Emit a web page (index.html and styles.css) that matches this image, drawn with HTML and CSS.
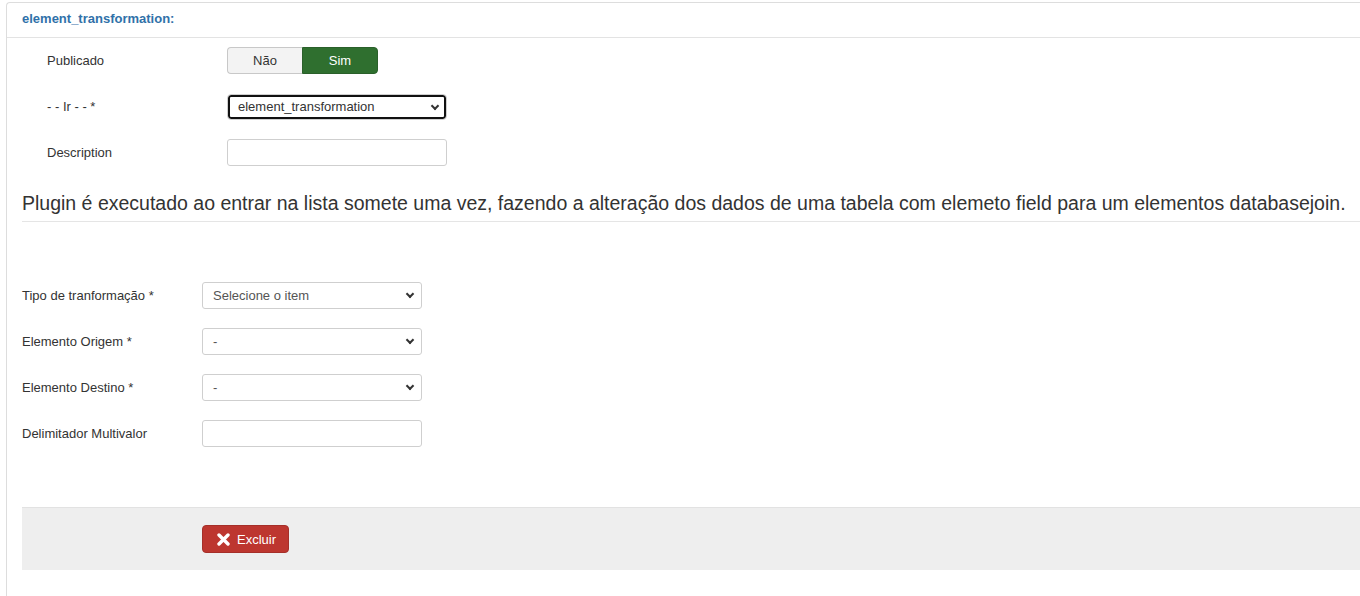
FILE: index.html
```html
<!DOCTYPE html>
<html lang="pt">
<head>
<meta charset="utf-8">
<title>element_transformation</title>
<link rel="stylesheet" href="styles.css">
</head>
<body>
<div class="panel">
  <div class="panel-head">element_transformation:</div>
  <div class="panel-body">
    <div class="group-top">
      <div class="row">
        <label class="lbl">Publicado</label>
        <div class="toggle">
          <span class="tbtn tno">Não</span>
          <span class="tbtn tyes">Sim</span>
        </div>
      </div>
      <div class="row">
        <label class="lbl">- - Ir - - *</label>
        <span class="sel focused"><span class="sel-text dark">element_transformation</span></span>
      </div>
      <div class="row">
        <label class="lbl">Description</label>
        <span class="inp"></span>
      </div>
    </div>
    <div class="legend">Plugin é executado ao entrar na lista somete uma vez, fazendo a alteração dos dados de uma tabela com elemeto field para um elementos databasejoin.</div>
    <div class="group-main">
      <div class="row">
        <label class="lbl">Tipo de tranformação *</label>
        <span class="sel"><span class="sel-text">Selecione o item</span></span>
      </div>
      <div class="row">
        <label class="lbl">Elemento Origem *</label>
        <span class="sel"><span class="sel-text">-</span></span>
      </div>
      <div class="row">
        <label class="lbl">Elemento Destino *</label>
        <span class="sel"><span class="sel-text">-</span></span>
      </div>
      <div class="row">
        <label class="lbl">Delimitador Multivalor</label>
        <span class="inp"></span>
      </div>
    </div>
    <div class="actions">
      <span class="btn-danger">
        <svg class="x-icon" width="13" height="13" viewBox="0 0 13 13"><path d="M2 2 L11 11 M11 2 L2 11" stroke="#fff" stroke-width="3.4" stroke-linecap="round"/></svg>
        Excluir
      </span>
    </div>
  </div>
</div>
</body>
</html>
```

FILE: styles.css
```css
html, body {
  margin: 0;
  padding: 0;
  overflow: hidden;
  background: #fff;
}
body {
  font-family: "Liberation Sans", Arial, sans-serif;
  font-size: 13px;
  color: #333;
  height: 596px;
}
.panel {
  margin: 2px -30px 0 6px;
  border-left: 1px solid #ddd;
  border-top: 1px solid #ddd;
  border-top-left-radius: 4px;
  min-height: 600px;
}
.panel-head {
  height: 34px;
  line-height: 32px;
  padding-left: 15px;
  color: #3071a9;
  font-weight: bold;
  border-bottom: 1px solid #e3e3e3;
}
.panel-body {
  padding-left: 15px;
}
.group-top {
  padding: 9px 0 0 25px;
  display: flex;
  flex-direction: column;
  gap: 19px;
}
.row {
  display: flex;
  align-items: center;
  min-height: 27px;
}
.lbl {
  width: 180px;
  flex: none;
}
.toggle {
  display: flex;
  height: 27px;
}
.tbtn {
  display: flex;
  align-items: center;
  justify-content: center;
  box-sizing: border-box;
  height: 27px;
}
.tno {
  width: 75px;
  background: #f3f3f3;
  border: 1px solid #c8c8c8;
  border-right: none;
  border-radius: 4px 0 0 4px;
  color: #333;
}
.tyes {
  width: 76px;
  background: #2f6f2f;
  border: 1px solid #2a602a;
  border-radius: 0 4px 4px 0;
  color: #fff;
}
.sel, .inp {
  position: relative;
  display: flex;
  align-items: center;
  box-sizing: border-box;
  width: 220px;
  height: 27px;
  border: 1px solid #cfcfcf;
  border-radius: 3px;
  background: #fff;
}
.sel::after {
  content: "";
  position: absolute;
  right: 8px;
  top: 8px;
  width: 4px;
  height: 4px;
  border-right: 2px solid #333;
  border-bottom: 2px solid #333;
  transform: rotate(45deg);
}
.sel-text {
  padding-left: 10px;
  color: #555;
}
.sel-text.dark {
  color: #333;
}
.sel.focused {
  height: 26px;
  box-shadow: inset 0 0 0 2px #111;
  border-radius: 4px;
}
.legend {
  margin-top: 25px;
  font-size: 19.5px;
  line-height: 24px;
  padding-bottom: 6px;
  border-bottom: 1px solid #e5e5e5;
  color: #333;
  white-space: nowrap;
}
.group-main {
  margin-top: 60px;
  display: flex;
  flex-direction: column;
  gap: 19px;
}
.actions {
  margin-top: 60px;
  background: #eee;
  border-top: 1px solid #e2e2e2;
  height: 63px;
  padding: 17px 0 0 180px;
  box-sizing: border-box;
}
.btn-danger {
  display: inline-flex;
  align-items: center;
  gap: 7px;
  box-sizing: border-box;
  height: 28px;
  width: 87px;
  padding-left: 14px;
  background: #bd362f;
  border: 1px solid #a52f29;
  border-radius: 4px;
  color: #fff;
  font-size: 13px;
}
.x-icon {
  flex: none;
}
```
